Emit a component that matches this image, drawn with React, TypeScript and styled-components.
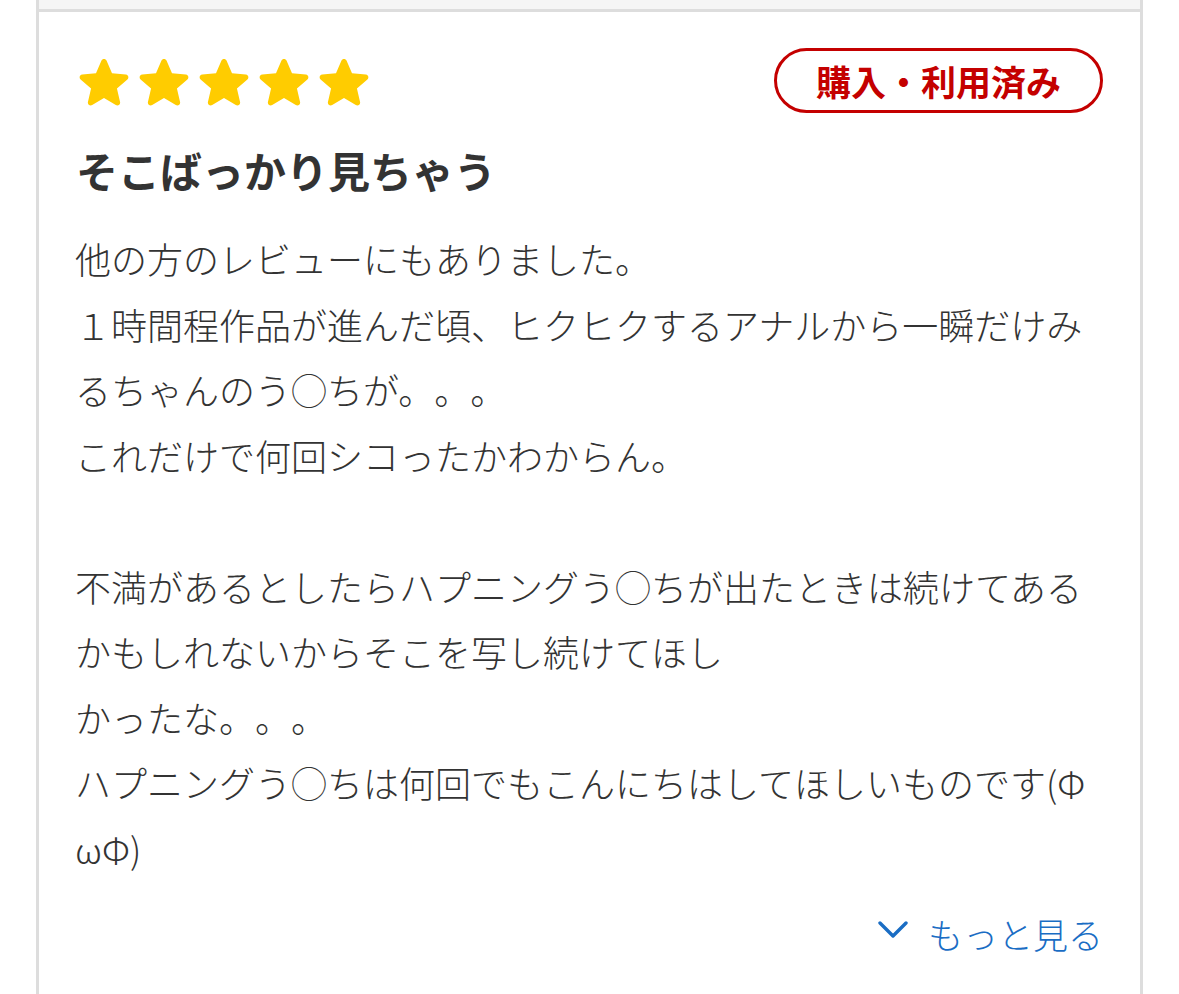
import * as React from "react";
import styled, { createGlobalStyle } from "styled-components";

const GlobalStyle = createGlobalStyle`
  html, body {
    margin: 0;
    padding: 0;
    background: #ffffff;
  }
  body {
    font-family: "Noto Sans CJK JP", "Noto Sans", sans-serif;
    color: #333333;
    text-spacing-trim: space-all;
  }
`;

const bodyLines = [
  "他の方のレビューにもありました。",
  "１時間程作品が進んだ頃、ヒクヒクするアナルから一瞬だけみ",
  "るちゃんのう◯ちが。。。",
  "これだけで何回シコったかわからん。",
  "",
  "不満があるとしたらハプニングう◯ちが出たときは続けてある",
  "かもしれないからそこを写し続けてほし",
  "かったな。。。",
  "ハプニングう◯ちは何回でもこんにちはしてほしいものです(Φ",
  "ωΦ)",
];

const Star: React.FC = () => (
  <StarSvg viewBox="3.3 2.2 17.4 17.9" aria-hidden="true">
    <path d="M12 17.27l4.15 2.51c.76.46 1.69-.22 1.49-1.08l-1.1-4.72 3.67-3.18c.67-.58.31-1.68-.57-1.75l-4.83-.41-1.89-4.46c-.34-.81-1.5-.81-1.84 0L9.19 8.63l-4.83.41c-.88.07-1.24 1.17-.57 1.75l3.67 3.18-1.1 4.72c-.2.86.73 1.54 1.49 1.08l4.15-2.5z" />
  </StarSvg>
);

const App: React.FC = () => {
  return (
    <>
      <GlobalStyle />
      <Frame>
        <PrevCardEnd />
        <ReviewCard>
          <HeaderRow>
            <Stars>
              {[0, 1, 2, 3, 4].map((i) => (
                <Star key={i} />
              ))}
            </Stars>
            <PurchasedBadge>購入・利用済み</PurchasedBadge>
          </HeaderRow>
          <ReviewTitle>そこばっかり見ちゃう</ReviewTitle>
          <ReviewBody>{bodyLines.join("\n")}</ReviewBody>
          <MoreRow>
            <MoreLink href="#">
              <svg width="30" height="20" viewBox="0 0 30 20" aria-hidden="true">
                <polyline
                  points="2,3 15,16 28,3"
                  fill="none"
                  stroke="currentColor"
                  strokeWidth="3.4"
                  strokeLinecap="round"
                  strokeLinejoin="round"
                />
              </svg>
              <span>もっと見る</span>
            </MoreLink>
          </MoreRow>
        </ReviewCard>
      </Frame>
    </>
  );
};

const Frame = styled.div`
  margin-left: 36px;
  width: 1107px;
  min-height: 100vh;
  box-sizing: border-box;
  border-left: 3px solid #dddddd;
  border-right: 3px solid #dddddd;
  display: flex;
  flex-direction: column;
`;

const PrevCardEnd = styled.div`
  height: 9px;
  background: #f5f5f5;
  border-bottom: 3px solid #dddddd;
`;

const ReviewCard = styled.div`
  flex: 1;
  padding: 36px 37px 30px 36px;
  display: flex;
  flex-direction: column;
  background: #ffffff;
`;

const HeaderRow = styled.div`
  display: flex;
  align-items: center;
  justify-content: space-between;
`;

const Stars = styled.div`
  display: flex;
  gap: 10px;
  padding-left: 4px;
`;

const StarSvg = styled.svg`
  width: 50px;
  height: 51px;
  fill: #ffcc00;
  display: block;
`;

const PurchasedBadge = styled.span`
  display: inline-flex;
  align-items: center;
  justify-content: center;
  box-sizing: border-box;
  height: 65px;
  padding: 0 39px;
  border: 3px solid #c40000;
  border-radius: 33px;
  color: #c40000;
  font-size: 35px;
  font-weight: 700;
  line-height: 1;
`;

const ReviewTitle = styled.h2`
  margin: 28px 0 0;
  padding-left: 1px;
  font-size: 42px;
  font-weight: 700;
  line-height: 57px;
  color: #333333;
`;

const ReviewBody = styled.p`
  margin: 28px 0 0;
  font-size: 36px;
  font-weight: 300;
  line-height: 65.5px;
  white-space: pre;
  color: #333333;
`;

const MoreRow = styled.div`
  display: flex;
  justify-content: flex-end;
  margin-top: 28px;
`;

const MoreLink = styled.a`
  display: inline-flex;
  align-items: center;
  gap: 20px;
  color: #1a6dc4;
  text-decoration: none;
  font-size: 35px;
  font-weight: 300;
  line-height: 50px;

  svg {
    margin-top: -8px;
  }
`;

export default App;
